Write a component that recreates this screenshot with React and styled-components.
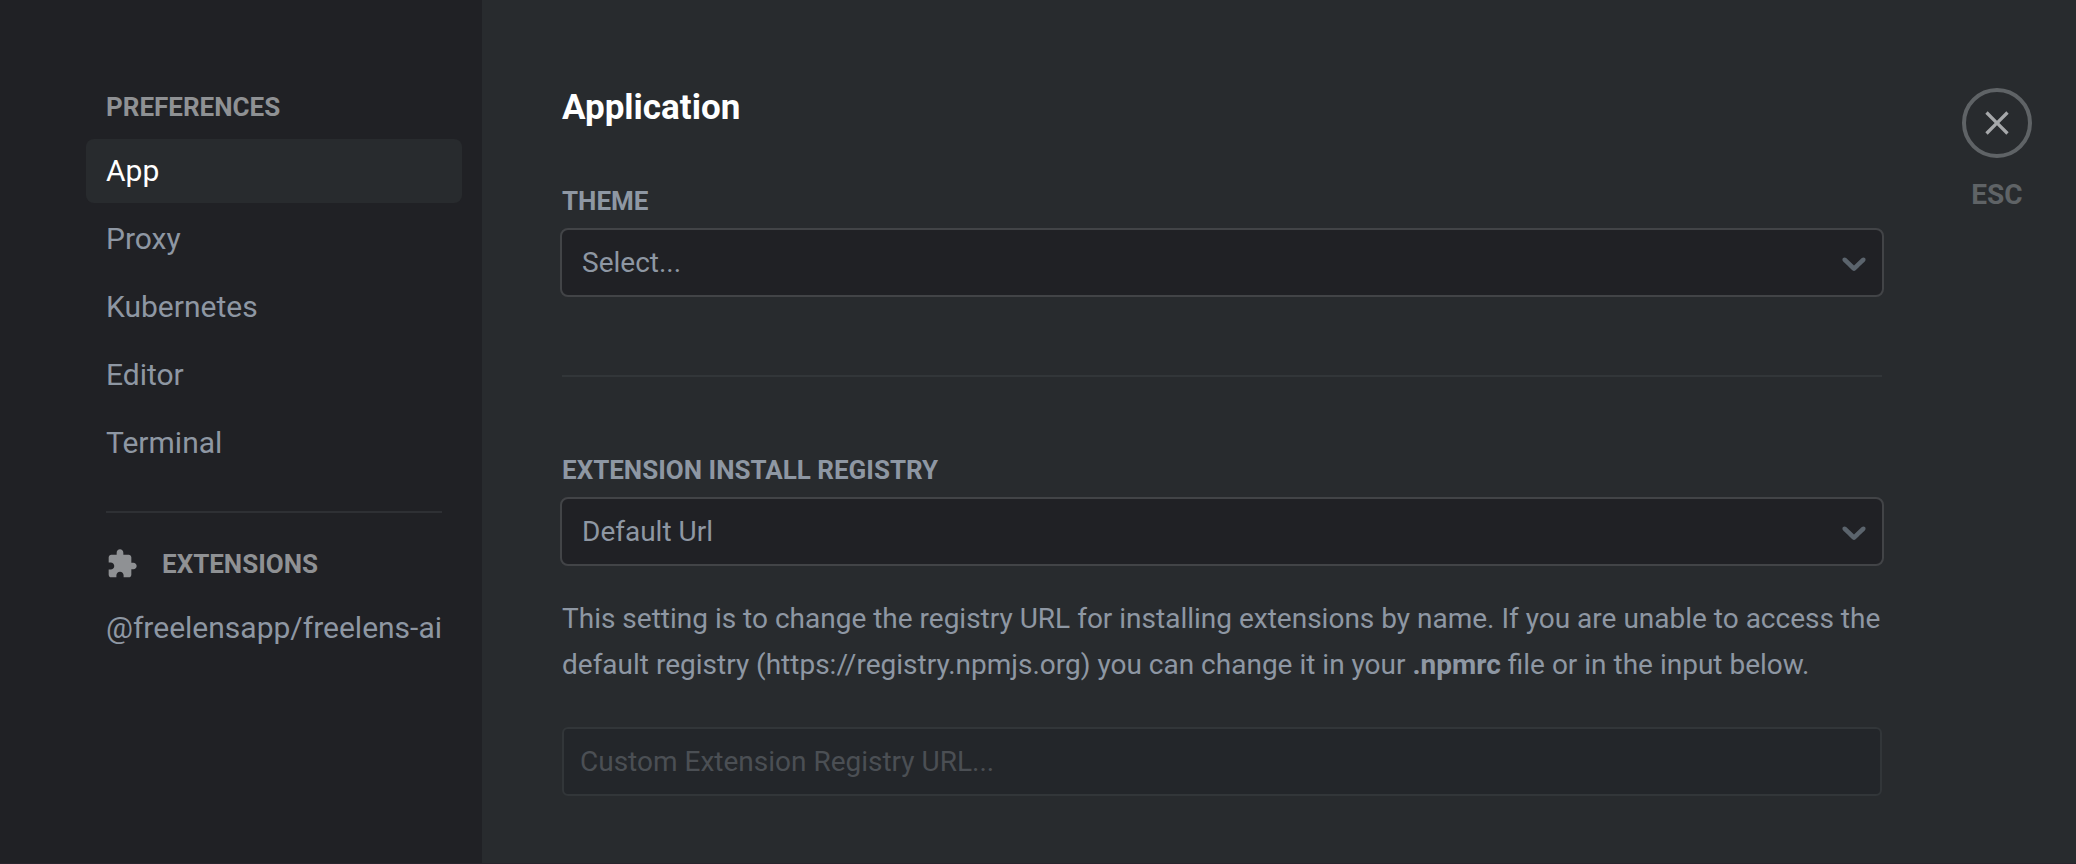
import React, { useState } from "react";
import styled, { createGlobalStyle } from "styled-components";

const GlobalStyle = createGlobalStyle`
  *, *::before, *::after { box-sizing: border-box; }
  html, body { margin: 0; background: #282b2e; }
  body, button, input, select {
    font-family: Roboto, "Liberation Sans", sans-serif;
    font-size: 28px;
  }
  h1, h2, p { margin: 0; }
`;

const Page = styled.div`
  display: flex;
  min-height: 100vh;
  background: #282b2e;
  color: #8e97a3;
  border-bottom: 1px solid #28242c;
`;

const Sidebar = styled.aside`
  flex: none;
  width: 482px;
  padding: 92px 20px 40px 86px;
  background: #202125;
`;

const SidebarTitle = styled.h2`
  display: flex;
  align-items: center;
  gap: 24px;
  height: 30px;
  padding: 0 20px;
  font-size: 26px;
  font-weight: 700;
  line-height: 30px;
  text-transform: uppercase;
  color: #8f9194;
`;

const NavList = styled.nav`
  display: flex;
  flex-direction: column;
  gap: 4px;
  margin-top: 17px;
`;

const NavLink = styled.a`
  padding: 0 20px;
  border-radius: 8px;
  font-size: 30px;
  line-height: 64px;
  text-decoration: none;
  white-space: nowrap;
  background: ${(p) => (p.$active ? "#282b2e" : "transparent")};
  color: ${(p) => (p.$active ? "#ffffff" : "#8e97a3")};
`;

const SidebarRule = styled.hr`
  height: 2px;
  margin: 36px 20px;
  border: 0;
  background: #2e3034;
`;

const Content = styled.main`
  flex: 1;
  min-width: 0;
  padding: 84px 80px 60px;
`;

const PageTitle = styled.h1`
  font-size: 35px;
  font-weight: 700;
  line-height: 48px;
  color: #ffffff;
`;

const Field = styled.section`
  display: flex;
  flex-direction: column;
  margin-top: ${(p) => p.$gap}px;
`;

const FieldLabel = styled.label`
  font-size: 26px;
  font-weight: 700;
  line-height: 30px;
  text-transform: uppercase;
`;

const SelectBox = styled.div`
  display: grid;
  align-items: center;
  margin: 12px -2px 0;

  > * { grid-area: 1 / 1; }
  > svg {
    justify-self: end;
    margin-right: 10px;
    pointer-events: none;
  }
`;

const Select = styled.select`
  appearance: none;
  width: 100%;
  height: 69px;
  padding: 0 60px 0 20px;
  border: 2px solid #424447;
  border-radius: 8px;
  background: #202125;
  color: #8e97a3;
`;

const Divider = styled.hr`
  width: 100%;
  height: 2px;
  margin: 78px 0 0;
  border: 0;
  background: #323639;
`;

const Hint = styled.p`
  margin: 30px 0 39px;
  font-size: 28px;
  line-height: 46px;
`;

const TextInput = styled.input`
  width: 100%;
  height: 69px;
  padding: 0 16px;
  border: 2px solid #323639;
  border-radius: 6px;
  background: #23262a;
  color: #8e97a3;

  &::placeholder { color: #4b4f54; opacity: 1; }
`;

const CloseColumn = styled.div`
  flex: none;
  width: 114px;
  padding-top: 88px;
`;

const CloseControl = styled.label`
  display: flex;
  flex-direction: column;
  align-items: center;
  gap: 20px;
  width: 70px;
  font-weight: 700;
  line-height: 34px;
  color: #5f6366;
`;

const CloseButton = styled.button`
  display: grid;
  place-items: center;
  width: 70px;
  height: 70px;
  padding: 0;
  border: 4px solid #5f6366;
  border-radius: 50%;
  background: transparent;
  color: #a6a8aa;
  cursor: pointer;
`;

const PuzzleIcon = () => (
  <svg width="32" height="32" viewBox="0 0 24 24" fill="currentColor" aria-hidden="true">
    <path d="M20.5 11H19V7c0-1.1-.9-2-2-2h-4V3.5C13 2.12 11.88 1 10.5 1S8 2.12 8 3.5V5H4c-1.1 0-1.99.9-1.99 2v3.8H3.5c1.49 0 2.7 1.21 2.7 2.7s-1.21 2.7-2.7 2.7H2V20c0 1.1.9 2 2 2h3.8v-1.5c0-1.49 1.21-2.7 2.7-2.7 1.49 0 2.7 1.21 2.7 2.7V22H17c1.1 0 2-.9 2-2v-4h1.5c1.38 0 2.5-1.12 2.5-2.5S21.88 11 20.5 11z" />
  </svg>
);

const ChevronIcon = () => (
  <svg width="40" height="40" viewBox="0 0 20 20" fill="#5b646d" aria-hidden="true">
    <path d="M4.516 7.548c0.436-0.446 1.043-0.481 1.576 0l3.908 3.747 3.908-3.747c0.533-0.481 1.141-0.446 1.574 0 0.436 0.445 0.408 1.197 0 1.615-0.406 0.418-4.695 4.502-4.695 4.502-0.217 0.223-0.502 0.335-0.787 0.335s-0.57-0.112-0.789-0.335c0 0-4.287-4.084-4.695-4.502s-0.436-1.17 0-1.615z" />
  </svg>
);

const CloseIcon = () => (
  <svg width="40" height="40" viewBox="0 0 24 24" fill="currentColor" aria-hidden="true">
    <path d="M19 6.41L17.59 5 12 10.59 6.41 5 5 6.41 10.59 12 5 17.59 6.41 19 12 13.41 17.59 19 19 17.59 13.41 12z" />
  </svg>
);

const PAGES = ["App", "Proxy", "Kubernetes", "Editor", "Terminal"];

export default function App() {
  const [active, setActive] = useState("App");
  const navItem = (name) => (
    <NavLink
      key={name}
      href="#"
      $active={active === name}
      aria-current={active === name ? "page" : undefined}
      onClick={(e) => {
        e.preventDefault();
        setActive(name);
      }}
    >
      {name}
    </NavLink>
  );

  return (
    <>
      <GlobalStyle />
      <Page>
        <Sidebar>
          <SidebarTitle>Preferences</SidebarTitle>
          <NavList aria-label="Preferences">{PAGES.map(navItem)}</NavList>
          <SidebarRule />
          <SidebarTitle>
            <PuzzleIcon />
            Extensions
          </SidebarTitle>
          <NavList aria-label="Extensions">{navItem("@freelensapp/freelens-ai")}</NavList>
        </Sidebar>

        <Content>
          <PageTitle>Application</PageTitle>

          <Field $gap={54}>
            <FieldLabel htmlFor="theme">Theme</FieldLabel>
            <SelectBox>
              <Select id="theme" defaultValue="">
                <option value="">Select...</option>
                <option value="dark">Dark</option>
                <option value="light">Light</option>
              </Select>
              <ChevronIcon />
            </SelectBox>
          </Field>

          <Divider />

          <Field $gap={78}>
            <FieldLabel htmlFor="registry">Extension Install Registry</FieldLabel>
            <SelectBox>
              <Select id="registry" defaultValue="default">
                <option value="default">Default Url</option>
                <option value="custom">Custom Url</option>
              </Select>
              <ChevronIcon />
            </SelectBox>
            <Hint>
              This setting is to change the registry URL for installing extensions by name. If you are
              unable to access the default registry (https://registry.npmjs.org) you can change it in
              your <b>.npmrc</b> file or in the input below.
            </Hint>
            <TextInput
              type="url"
              aria-label="Custom Extension Registry URL"
              placeholder="Custom Extension Registry URL..."
              disabled
            />
          </Field>
        </Content>

        <CloseColumn>
          <CloseControl>
            <CloseButton type="button" aria-label="Close">
              <CloseIcon />
            </CloseButton>
            ESC
          </CloseControl>
        </CloseColumn>
      </Page>
    </>
  );
}
